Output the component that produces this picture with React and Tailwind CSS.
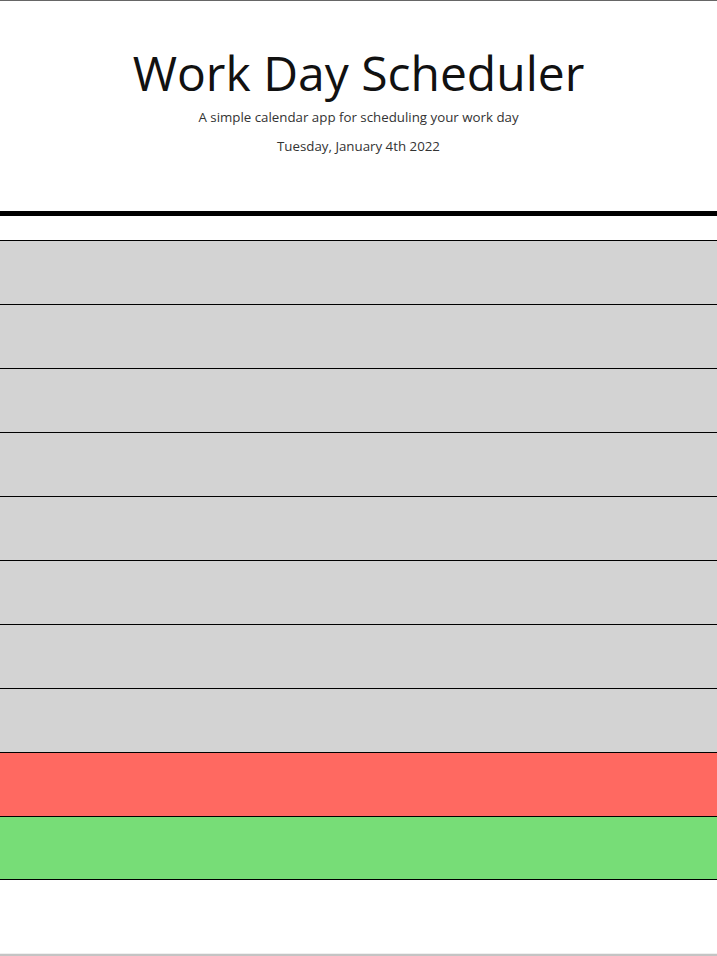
import React from "react";

const ROWS = [
  "past",
  "past",
  "past",
  "past",
  "past",
  "past",
  "past",
  "past",
  "present",
  "future",
];

const ROW_BG = {
  past: "bg-[#d3d3d3]",
  present: "bg-[#ff6961]",
  future: "bg-[#77dd77]",
};

export default function App() {
  return (
    <div
      className="flex h-[956px] flex-col bg-white text-black"
      style={{ fontFamily: "'Open Sans', 'Liberation Sans', sans-serif" }}
    >
      <div className="h-px bg-[#666666]" />

      {/* header */}
      <header className="border-b-[5px] border-black pt-[48px] pb-[58px] text-center">
        <h1 className="text-[48px] font-normal leading-[48px] text-[#111]">
          Work Day Scheduler
        </h1>
        <p className="mt-[14px] text-[13.3px] leading-[13px] text-[#333]">
          A simple calendar app for scheduling your work day
        </p>
        <p className="mt-[16px] text-[13.3px] leading-[13px] text-[#333]">
          Tuesday, January 4th 2022
        </p>
      </header>

      {/* time blocks */}
      <div className="mt-[24px] flex flex-col">
        {ROWS.map((state, i) => (
          <div
            key={i}
            className={`h-[64px] border-t border-black ${ROW_BG[state]} ${
              i === ROWS.length - 1 ? "border-b" : ""
            }`}
          />
        ))}
      </div>

      <div className="flex-1" />
      <div className="h-px bg-[#efefef]" />
      <div className="h-[2px] bg-[#c4c4c4]" />
    </div>
  );
}
